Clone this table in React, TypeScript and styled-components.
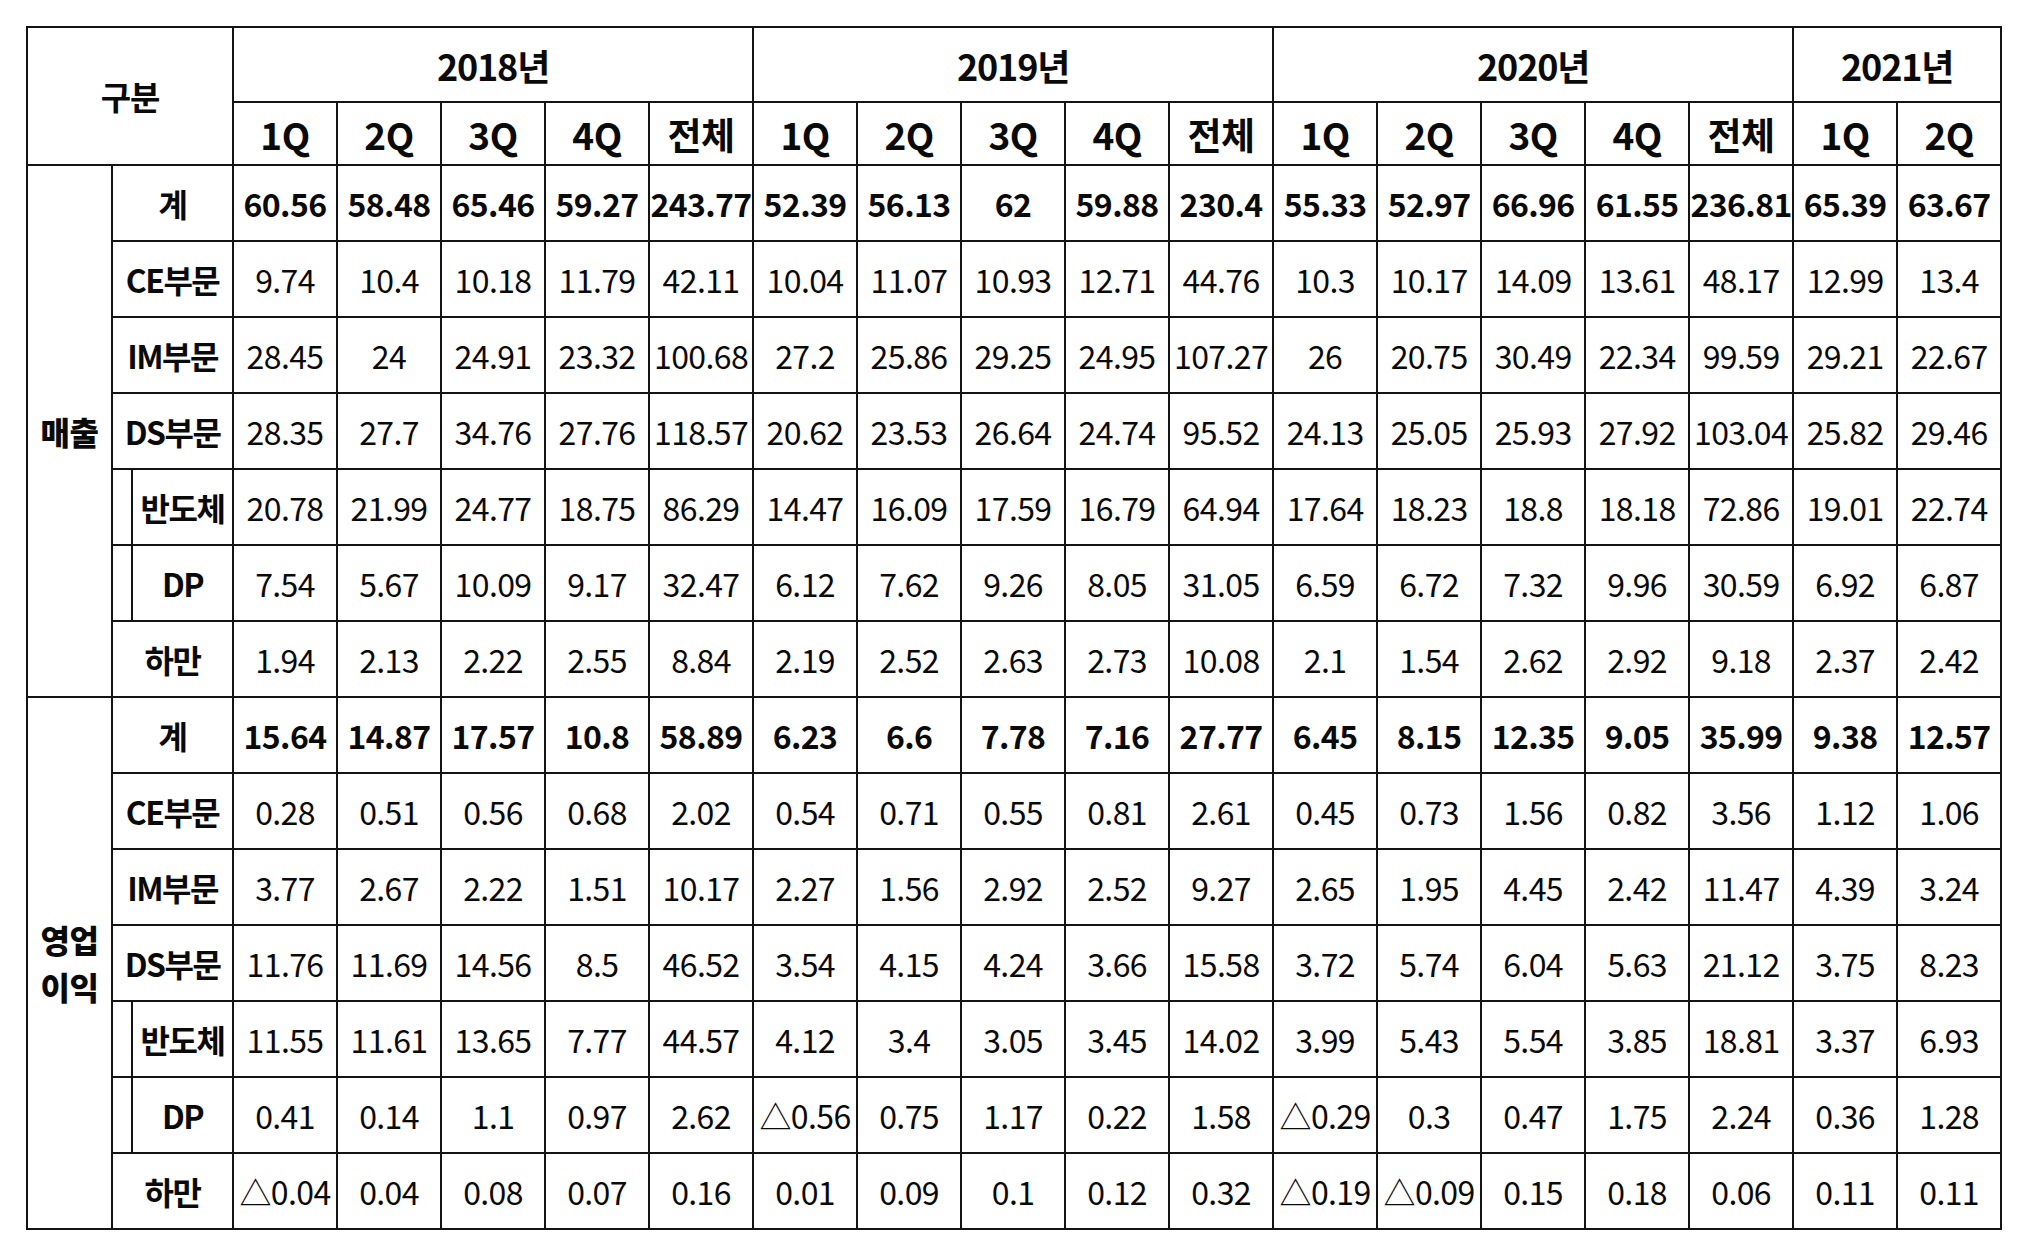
import React from 'react';
import styled, { createGlobalStyle } from 'styled-components';

const GlobalStyle = createGlobalStyle`
  html, body {
    margin: 0;
    padding: 0;
    background: #ffffff;
  }
  body {
    font-family: "Noto Sans CJK KR", "Noto Sans", sans-serif;
    color: #0a0a0a;
  }
`;

const Page = styled.div`
  padding: 26px 0 0 26px;
  width: 2023px;
  box-sizing: border-box;
`;

const Table = styled.table`
  border-collapse: collapse;
  table-layout: fixed;
  width: 1974px;
  font-family: "Noto Sans CJK KR", "Noto Sans", sans-serif;
  color: #0a0a0a;

  td, th {
    border: 2px solid #141414;
    padding: 0;
    text-align: center;
    vertical-align: middle;
    white-space: nowrap;
    overflow: hidden;
  }
`;

const YearRow = styled.tr`
  height: 75px;
`;

const QuarterRow = styled.tr`
  height: 63px;
`;

const DataRow = styled.tr`
  height: 76px;
`;

const CornerCell = styled.th`
  font-size: 33px;
  font-weight: 700;
  letter-spacing: -1px;
`;

const YearCell = styled.th`
  font-size: 36px;
  font-weight: 700;
  letter-spacing: -1.2px;
`;

const QuarterCell = styled.th`
  font-size: 37px;
  font-weight: 600;
  letter-spacing: -0.5px;
`;

const GroupCell = styled.td`
  font-size: 32px;
  font-weight: 900;
  letter-spacing: -0.5px;
`;

const GroupLine = styled.span`
  display: block;
  line-height: 47px;
`;

const LabelCell = styled.td`
  font-size: 32px;
  font-weight: 700;
  letter-spacing: -1.5px;
`;

const IndentCell = styled.td``;

const ValueCell = styled.td<{ $bold?: boolean }>`
  font-size: 32px;
  font-weight: ${(p) => (p.$bold ? 700 : 400)};
  letter-spacing: -0.6px;
`;

type Row = {
  label: string;
  sub?: boolean;
  bold?: boolean;
  values: string[];
};

const years = [
  { year: '2018년', quarters: ['1Q', '2Q', '3Q', '4Q', '전체'] },
  { year: '2019년', quarters: ['1Q', '2Q', '3Q', '4Q', '전체'] },
  { year: '2020년', quarters: ['1Q', '2Q', '3Q', '4Q', '전체'] },
  { year: '2021년', quarters: ['1Q', '2Q'] },
];

const sales: Row[] = [
  {
    label: '계',
    bold: true,
    values: '60.56 58.48 65.46 59.27 243.77 52.39 56.13 62 59.88 230.4 55.33 52.97 66.96 61.55 236.81 65.39 63.67'.split(' '),
  },
  {
    label: 'CE부문',
    values: '9.74 10.4 10.18 11.79 42.11 10.04 11.07 10.93 12.71 44.76 10.3 10.17 14.09 13.61 48.17 12.99 13.4'.split(' '),
  },
  {
    label: 'IM부문',
    values: '28.45 24 24.91 23.32 100.68 27.2 25.86 29.25 24.95 107.27 26 20.75 30.49 22.34 99.59 29.21 22.67'.split(' '),
  },
  {
    label: 'DS부문',
    values: '28.35 27.7 34.76 27.76 118.57 20.62 23.53 26.64 24.74 95.52 24.13 25.05 25.93 27.92 103.04 25.82 29.46'.split(' '),
  },
  {
    label: '반도체',
    sub: true,
    values: '20.78 21.99 24.77 18.75 86.29 14.47 16.09 17.59 16.79 64.94 17.64 18.23 18.8 18.18 72.86 19.01 22.74'.split(' '),
  },
  {
    label: 'DP',
    sub: true,
    values: '7.54 5.67 10.09 9.17 32.47 6.12 7.62 9.26 8.05 31.05 6.59 6.72 7.32 9.96 30.59 6.92 6.87'.split(' '),
  },
  {
    label: '하만',
    values: '1.94 2.13 2.22 2.55 8.84 2.19 2.52 2.63 2.73 10.08 2.1 1.54 2.62 2.92 9.18 2.37 2.42'.split(' '),
  },
];

const profit: Row[] = [
  {
    label: '계',
    bold: true,
    values: '15.64 14.87 17.57 10.8 58.89 6.23 6.6 7.78 7.16 27.77 6.45 8.15 12.35 9.05 35.99 9.38 12.57'.split(' '),
  },
  {
    label: 'CE부문',
    values: '0.28 0.51 0.56 0.68 2.02 0.54 0.71 0.55 0.81 2.61 0.45 0.73 1.56 0.82 3.56 1.12 1.06'.split(' '),
  },
  {
    label: 'IM부문',
    values: '3.77 2.67 2.22 1.51 10.17 2.27 1.56 2.92 2.52 9.27 2.65 1.95 4.45 2.42 11.47 4.39 3.24'.split(' '),
  },
  {
    label: 'DS부문',
    values: '11.76 11.69 14.56 8.5 46.52 3.54 4.15 4.24 3.66 15.58 3.72 5.74 6.04 5.63 21.12 3.75 8.23'.split(' '),
  },
  {
    label: '반도체',
    sub: true,
    values: '11.55 11.61 13.65 7.77 44.57 4.12 3.4 3.05 3.45 14.02 3.99 5.43 5.54 3.85 18.81 3.37 6.93'.split(' '),
  },
  {
    label: 'DP',
    sub: true,
    values: '0.41 0.14 1.1 0.97 2.62 △0.56 0.75 1.17 0.22 1.58 △0.29 0.3 0.47 1.75 2.24 0.36 1.28'.split(' '),
  },
  {
    label: '하만',
    values: '△0.04 0.04 0.08 0.07 0.16 0.01 0.09 0.1 0.12 0.32 △0.19 △0.09 0.15 0.18 0.06 0.11 0.11'.split(' '),
  },
];

const groups = [
  { name: ['매출'], rows: sales },
  { name: ['영업', '이익'], rows: profit },
];

const App: React.FC = () => {
  return (
    <>
      <GlobalStyle />
      <Page>
        <Table>
          <colgroup>
            <col style={{ width: 85 }} />
            <col style={{ width: 20 }} />
            <col style={{ width: 101 }} />
            {Array.from({ length: 17 }).map((_, i) => (
              <col key={i} style={{ width: 104 }} />
            ))}
          </colgroup>
          <thead>
            <YearRow>
              <CornerCell rowSpan={2} colSpan={3}>
                구분
              </CornerCell>
              {years.map((y) => (
                <YearCell key={y.year} colSpan={y.quarters.length}>
                  {y.year}
                </YearCell>
              ))}
            </YearRow>
            <QuarterRow>
              {years.map((y) =>
                y.quarters.map((q) => <QuarterCell key={y.year + q}>{q}</QuarterCell>)
              )}
            </QuarterRow>
          </thead>
          <tbody>
            {groups.map((g) =>
              g.rows.map((row, i) => (
                <DataRow key={g.name.join('') + row.label}>
                  {i === 0 && (
                    <GroupCell rowSpan={g.rows.length}>
                      {g.name.map((n) => (
                        <GroupLine key={n}>{n}</GroupLine>
                      ))}
                    </GroupCell>
                  )}
                  {row.sub ? (
                    <>
                      <IndentCell />
                      <LabelCell>{row.label}</LabelCell>
                    </>
                  ) : (
                    <LabelCell colSpan={2}>{row.label}</LabelCell>
                  )}
                  {row.values.map((v, k) => (
                    <ValueCell key={k} $bold={row.bold}>
                      {v}
                    </ValueCell>
                  ))}
                </DataRow>
              ))
            )}
          </tbody>
        </Table>
      </Page>
    </>
  );
};

export default App;
